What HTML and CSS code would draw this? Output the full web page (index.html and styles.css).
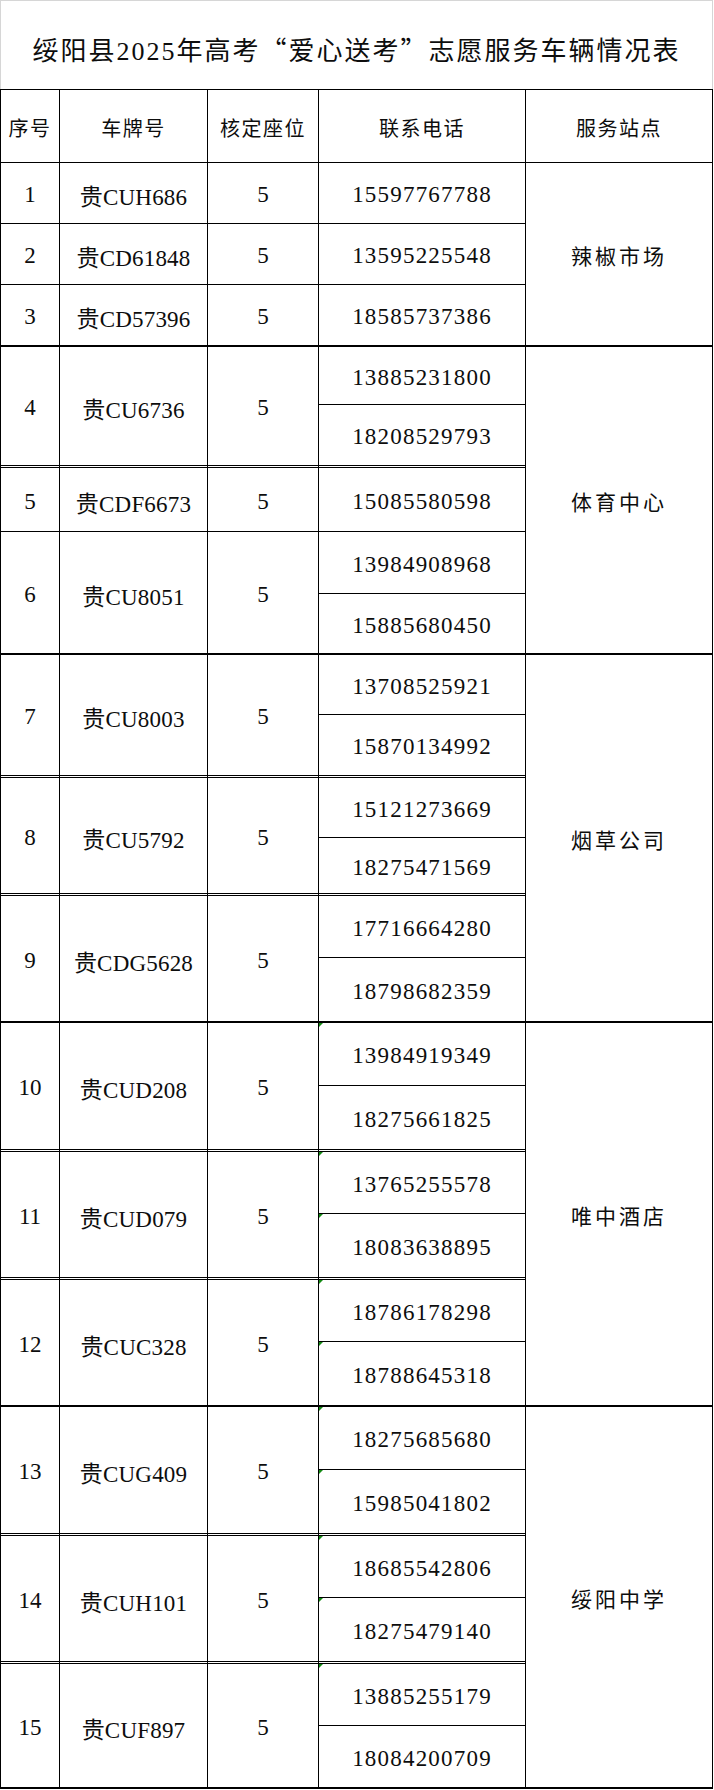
FILE: index.html
```html
<!DOCTYPE html>
<html lang="zh-CN">
<head>
<meta charset="utf-8">
<title>绥阳县2025年高考“爱心送考”志愿服务车辆情况表</title>
<link rel="stylesheet" href="styles.css">
</head>
<body>
<div class="sheet">
  <div class="title">绥阳县2025年高考<span class="q">“</span>爱心送考<span class="q">”</span>志愿服务车辆情况表</div>
  <div class="grid">
    <div class="c hd">序号</div>
    <div class="c hd">车牌号</div>
    <div class="c hd">核定座位</div>
    <div class="c hd">联系电话</div>
    <div class="c hd st-h">服务站点</div>

    <div class="c">1</div><div class="c pl">贵CUH686</div><div class="c">5</div><div class="c ph">15597767788</div>
    <div class="c st thk s3">辣椒市场</div>
    <div class="c">2</div><div class="c pl">贵CD61848</div><div class="c">5</div><div class="c ph">13595225548</div>
    <div class="c thk">3</div><div class="c pl thk">贵CD57396</div><div class="c thk">5</div><div class="c ph thk">18585737386</div>

    <div class="c s2 dbl">4</div><div class="c pl s2 dbl">贵CU6736</div><div class="c s2 dbl">5</div><div class="c ph">13885231800</div>
    <div class="c st thk s5">体育中心</div>
    <div class="c ph dbl">18208529793</div>
    <div class="c">5</div><div class="c pl">贵CDF6673</div><div class="c">5</div><div class="c ph">15085580598</div>
    <div class="c s2 thk">6</div><div class="c pl s2 thk">贵CU8051</div><div class="c s2 thk">5</div><div class="c ph">13984908968</div>
    <div class="c ph thk">15885680450</div>

    <div class="c s2 dbl">7</div><div class="c pl s2 dbl">贵CU8003</div><div class="c s2 dbl">5</div><div class="c ph">13708525921</div>
    <div class="c st thk s6">烟草公司</div>
    <div class="c ph dbl">15870134992</div>
    <div class="c s2 dbl">8</div><div class="c pl s2 dbl">贵CU5792</div><div class="c s2 dbl">5</div><div class="c ph">15121273669</div>
    <div class="c ph dbl">18275471569</div>
    <div class="c s2 thk">9</div><div class="c pl s2 thk">贵CDG5628</div><div class="c s2 thk">5</div><div class="c ph">17716664280</div>
    <div class="c ph thk">18798682359</div>

    <div class="c s2 dbl">10</div><div class="c pl s2 dbl">贵CUD208</div><div class="c s2 dbl">5</div><div class="c ph mk">13984919349</div>
    <div class="c st thk s6">唯中酒店</div>
    <div class="c ph dbl">18275661825</div>
    <div class="c s2 dbl">11</div><div class="c pl s2 dbl">贵CUD079</div><div class="c s2 dbl">5</div><div class="c ph mk">13765255578</div>
    <div class="c ph dbl mk">18083638895</div>
    <div class="c s2 thk">12</div><div class="c pl s2 thk">贵CUC328</div><div class="c s2 thk">5</div><div class="c ph mk">18786178298</div>
    <div class="c ph thk mk">18788645318</div>

    <div class="c s2 dbl">13</div><div class="c pl s2 dbl">贵CUG409</div><div class="c s2 dbl">5</div><div class="c ph mk">18275685680</div>
    <div class="c st thk s6">绥阳中学</div>
    <div class="c ph dbl mk">15985041802</div>
    <div class="c s2 dbl">14</div><div class="c pl s2 dbl">贵CUH101</div><div class="c s2 dbl">5</div><div class="c ph mk">18685542806</div>
    <div class="c ph dbl mk">18275479140</div>
    <div class="c s2 thk">15</div><div class="c pl s2 thk">贵CUF897</div><div class="c s2 thk">5</div><div class="c ph mk">13885255179</div>
    <div class="c ph thk">18084200709</div>
  </div>
</div>
</body>
</html>
```

FILE: styles.css
```css
* { box-sizing: border-box; }

html, body {
  margin: 0;
  padding: 0;
  background: #ffffff;
}

body {
  font-family: "Liberation Serif", "Noto Sans CJK SC", serif;
  color: #0d0d0d;
}

.sheet {
  width: 714px;
}

.title {
  height: 89px;
  border-top: 1px solid #d6d6d6;
  border-left: 1px solid #d6d6d6;
  border-right: 1px solid #d6d6d6;
  width: 713px;
  display: flex;
  align-items: center;
  justify-content: center;
  padding-top: 6px;
  font-size: 26px;
  letter-spacing: 2px;
  white-space: nowrap;
}

.q {
  font-family: "Noto Sans CJK SC", sans-serif;
}

.grid {
  width: 713px;
  display: grid;
  grid-template-columns: 59px 148px 111px 207px 187px;
  grid-template-rows:
    73px
    61px 61px 62px
    58px 63px 64px 62px 61px
    60px 63px 60px 58px 62px 65px
    63px 66px 62px 66px 62px 65px
    63px 66px 62px 66px 62px 63px;
  border-top: 1px solid #000;
  border-left: 1px solid #000;
}

.c {
  position: relative;
  display: flex;
  align-items: center;
  justify-content: center;
  padding-top: 4px;
  border-right: 1px solid #000;
  border-bottom: 1px solid #000;
  font-size: 23px;
  white-space: nowrap;
}

.hd {
  font-size: 20px;
  letter-spacing: 1.5px;
  padding-top: 3px;
}

.pl {
  letter-spacing: 0.2px;
}

.ph {
  letter-spacing: 1.2px;
}

.st {
  font-size: 21px;
  letter-spacing: 3px;
  padding-top: 2px;
}

.s2 { grid-row: span 2; }
.s3 { grid-row: span 3; }
.s5 { grid-row: span 5; }
.s6 { grid-row: span 6; }

.dbl { border-bottom: 3px double #000; }
.thk { border-bottom: 2px solid #000; }

.mk::before {
  content: "";
  position: absolute;
  left: 0;
  top: 0;
  width: 0;
  height: 0;
  border-top: 4px solid #138a13;
  border-right: 4px solid transparent;
}
```
